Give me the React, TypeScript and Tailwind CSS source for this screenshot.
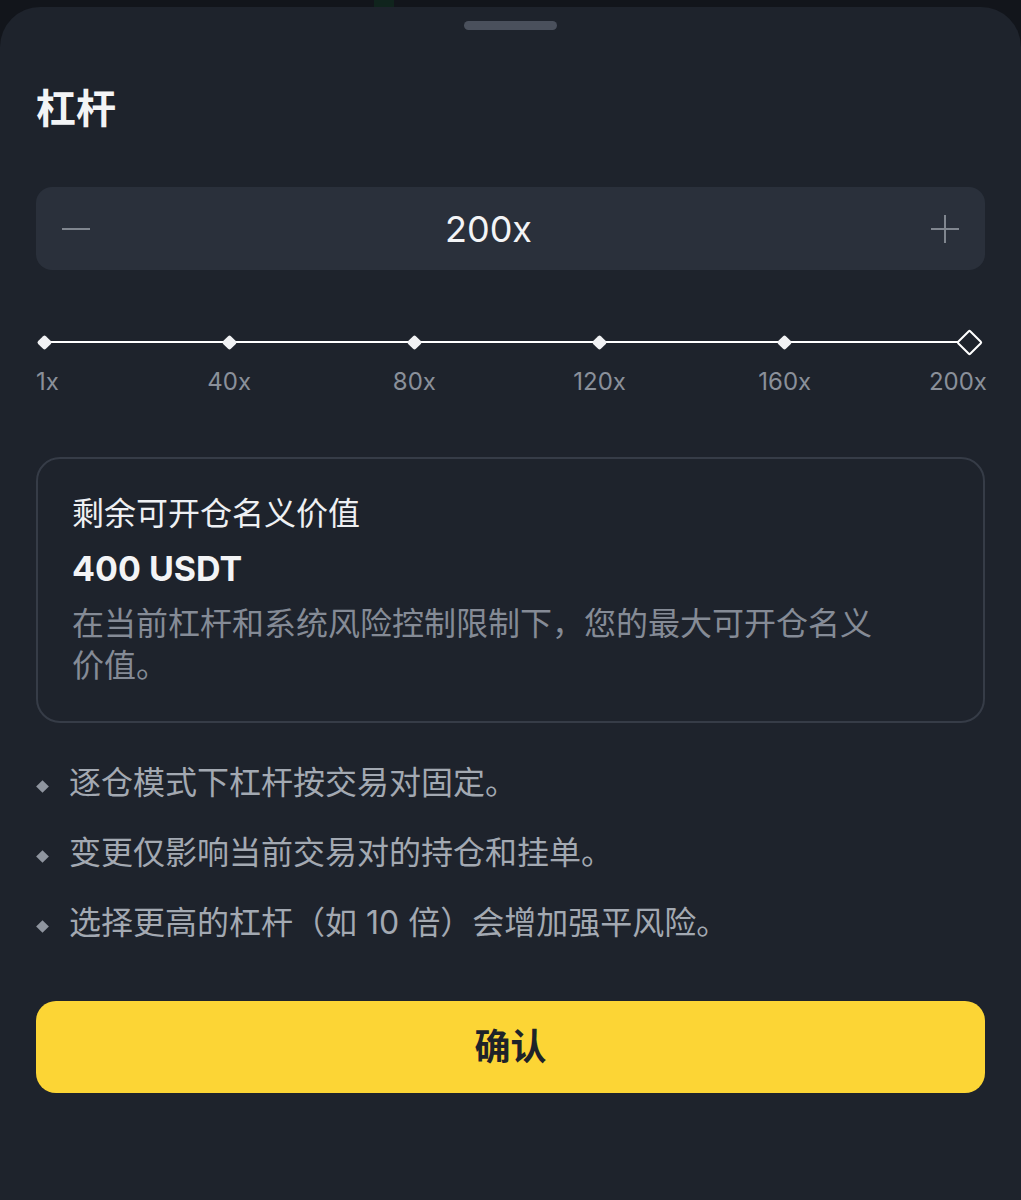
const marks = ["1x", "40x", "80x", "120x", "160x", "200x"];

const notes = [
  "逐仓模式下杠杆按交易对固定。",
  "变更仅影响当前交易对的持仓和挂单。",
  "选择更高的杠杆（如 10 倍）会增加强平风险。",
];

const LeverageSlider = () => (
  <div className="relative mt-[57px] ml-[8px] mr-[15px] flex justify-between">
    {/* track */}
    <div className="absolute inset-x-0 top-[14px] h-[2px] bg-white" />
    {marks.map((m, i) => {
      const last = i === marks.length - 1;
      return (
        <div
          key={m}
          className={
            "relative flex w-0 flex-col " +
            (i === 0 ? "items-start" : last ? "items-end" : "items-center")
          }
        >
          <div
            className={
              "flex h-[30px] w-[30px] items-center justify-center " +
              (i === 0 ? "-ml-[15px]" : last ? "-mr-[15px]" : "")
            }
          >
            {last ? (
              <div className="h-[19px] w-[19px] rotate-45 rounded-[2px] border-2 border-white bg-[#1e232c]" />
            ) : (
              <div className="h-[11px] w-[11px] rotate-45 rounded-[2px] bg-[#f1f2f4]" />
            )}
          </div>
          <span
            className={
              "mt-[10px] whitespace-nowrap text-[24px] leading-[30px] text-[#8a909a] " +
              (i === 0 ? "-ml-[8px]" : last ? "-mr-[17px]" : "")
            }
          >
            {m}
          </span>
        </div>
      );
    })}
  </div>
);

export default function App() {
  return (
    <div
      className="flex min-h-screen flex-col bg-[#12151b]"
      style={{ fontFamily: '"Inter", "Noto Sans CJK SC", sans-serif' }}
    >
      <div className="ml-[374px] h-[7px] w-[20px] bg-[#10241d]" />
      <div className="flex flex-1 flex-col rounded-t-[40px] bg-[#1e232c] px-9">
        <div className="mx-auto mt-[14px] h-[9px] w-[93px] rounded-full bg-[#4a505c]" />

        <h1 className="mt-[55px] text-[40px] font-bold leading-[48px] text-[#f3f4f6]">
          杠杆
        </h1>

        <div className="mt-[54px] flex h-[83px] items-center rounded-[16px] bg-[#2a303b] px-[26px]">
          <div className="h-[2px] w-[28px] bg-[#80868f]" />
          <span className="flex-1 pr-[44px] text-center text-[36px] leading-none text-[#f3f4f6]">
            200x
          </span>
          <div className="relative flex h-[28px] w-[28px] items-center justify-center">
            <div className="h-[2px] w-[28px] bg-[#80868f]" />
            <div className="absolute h-[28px] w-[2px] bg-[#80868f]" />
          </div>
        </div>

        <LeverageSlider />

        <div className="mt-[60px] rounded-[24px] border-2 border-[#363c47] px-[34px] pt-[34px] pb-[34px]">
          <p className="text-[32px] leading-[42px] text-[#eef0f3]">剩余可开仓名义价值</p>
          <p className="mt-[14px] text-[34px] font-bold leading-[40px] text-[#f3f4f6]">
            400 USDT
          </p>
          <p className="mt-[14px] max-w-[820px] text-[32px] leading-[42px] text-[#858b96]">
            在当前杠杆和系统风险控制限制下，您的最大可开仓名义价值。
          </p>
        </div>

        <ul className="mt-[39px] flex flex-col gap-[28px]">
          {notes.map((n) => (
            <li key={n} className="flex items-center text-[32px] leading-[42px] text-[#a3a9b2]">
              <span className="ml-[2px] mr-[22px] mt-[6px] h-[9px] w-[9px] rotate-45 bg-[#8f959f]" />
              {n}
            </li>
          ))}
        </ul>

        <button className="mt-[57px] h-[92px] w-full rounded-[20px] bg-[#fcd535] text-[36px] font-bold text-[#1e2329]">
          确认
        </button>
      </div>
    </div>
  );
}
